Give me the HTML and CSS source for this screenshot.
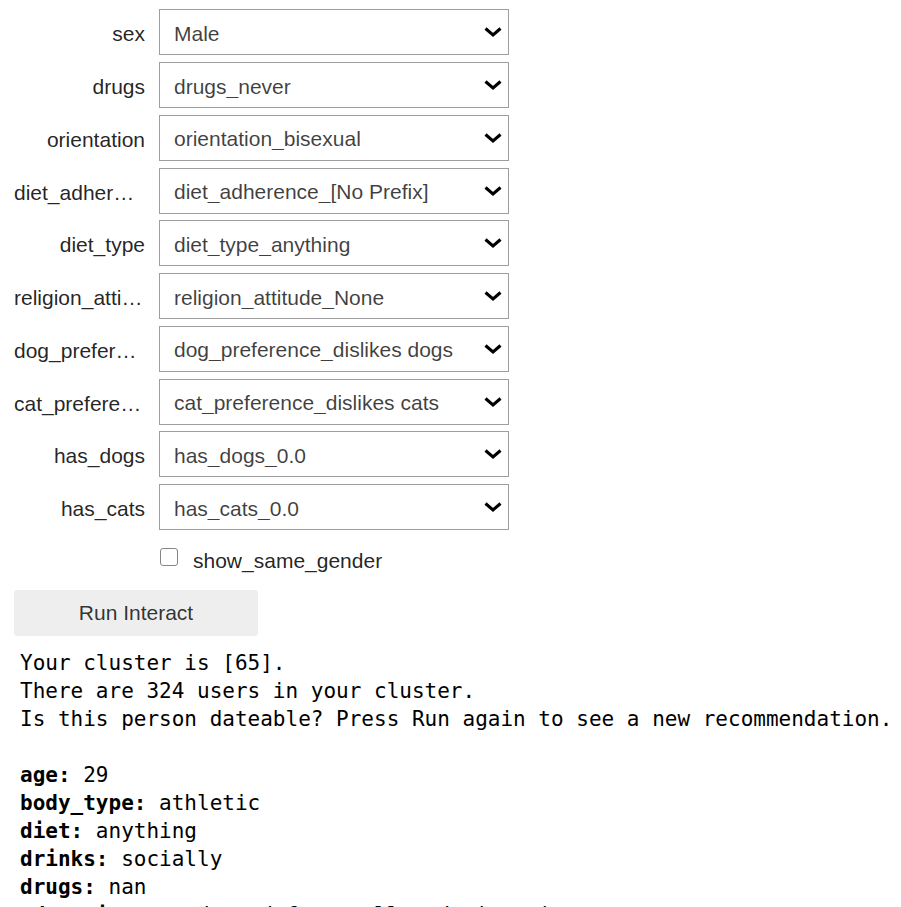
FILE: index.html
```html
<!DOCTYPE html>
<html>
<head>
<meta charset="utf-8">
<link rel="stylesheet" href="styles.css">
</head>
<body>
<div class="widgets">
  <div class="row"><label class="lbl">sex</label><div class="dd"><select class="sel"><option>Male</option></select><svg class="chev" width="18" height="10" viewBox="0 0 18 10"><polyline points="1.5,1.5 9,8 16.5,1.5"/></svg></div></div>
  <div class="row"><label class="lbl">drugs</label><div class="dd"><select class="sel"><option>drugs_never</option></select><svg class="chev" width="18" height="10" viewBox="0 0 18 10"><polyline points="1.5,1.5 9,8 16.5,1.5"/></svg></div></div>
  <div class="row"><label class="lbl">orientation</label><div class="dd"><select class="sel"><option>orientation_bisexual</option></select><svg class="chev" width="18" height="10" viewBox="0 0 18 10"><polyline points="1.5,1.5 9,8 16.5,1.5"/></svg></div></div>
  <div class="row"><label class="lbl">diet_adherence</label><div class="dd"><select class="sel"><option>diet_adherence_[No Prefix]</option></select><svg class="chev" width="18" height="10" viewBox="0 0 18 10"><polyline points="1.5,1.5 9,8 16.5,1.5"/></svg></div></div>
  <div class="row"><label class="lbl">diet_type</label><div class="dd"><select class="sel"><option>diet_type_anything</option></select><svg class="chev" width="18" height="10" viewBox="0 0 18 10"><polyline points="1.5,1.5 9,8 16.5,1.5"/></svg></div></div>
  <div class="row"><label class="lbl">religion_attitude</label><div class="dd"><select class="sel"><option>religion_attitude_None</option></select><svg class="chev" width="18" height="10" viewBox="0 0 18 10"><polyline points="1.5,1.5 9,8 16.5,1.5"/></svg></div></div>
  <div class="row"><label class="lbl">dog_preference</label><div class="dd"><select class="sel"><option>dog_preference_dislikes dogs</option></select><svg class="chev" width="18" height="10" viewBox="0 0 18 10"><polyline points="1.5,1.5 9,8 16.5,1.5"/></svg></div></div>
  <div class="row"><label class="lbl">cat_preference</label><div class="dd"><select class="sel"><option>cat_preference_dislikes cats</option></select><svg class="chev" width="18" height="10" viewBox="0 0 18 10"><polyline points="1.5,1.5 9,8 16.5,1.5"/></svg></div></div>
  <div class="row"><label class="lbl">has_dogs</label><div class="dd"><select class="sel"><option>has_dogs_0.0</option></select><svg class="chev" width="18" height="10" viewBox="0 0 18 10"><polyline points="1.5,1.5 9,8 16.5,1.5"/></svg></div></div>
  <div class="row"><label class="lbl">has_cats</label><div class="dd"><select class="sel"><option>has_cats_0.0</option></select><svg class="chev" width="18" height="10" viewBox="0 0 18 10"><polyline points="1.5,1.5 9,8 16.5,1.5"/></svg></div></div>
  <div class="row check-row"><label class="cb-wrap"><input type="checkbox" class="cb"><span class="cb-text">show_same_gender</span></label></div>
  <div class="row"><button class="run">Run Interact</button></div>
</div>
<pre class="out">Your cluster is [65].
There are 324 users in your cluster.
Is this person dateable? Press Run again to see a new recommendation.

<b>age:</b> 29
<b>body_type:</b> athletic
<b>diet:</b> anything
<b>drinks:</b> socially
<b>drugs:</b> nan
<b>education:</b> graduated from college/university</pre>
</body>
</html>
```

FILE: styles.css
```css
html, body {
  margin: 0;
  padding: 0;
  background: #ffffff;
}

body {
  font-family: "Liberation Sans", Arial, sans-serif;
  font-size: 21px;
  color: rgba(0, 0, 0, 0.87);
}

.widgets {
  display: flex;
  flex-direction: column;
  gap: 6.75px;
  padding: 9.25px 0 0 14px;
}

.row {
  display: flex;
  align-items: center;
  height: 46px;
}

.lbl {
  width: 131px;
  margin-right: 14px;
  padding-top: 3px;
  text-align: right;
  white-space: nowrap;
  overflow: hidden;
  text-overflow: ellipsis;
  color: rgba(0, 0, 0, 0.87);
  line-height: 43px;
}

.dd {
  position: relative;
  width: 350px;
  height: 46px;
}

.sel {
  appearance: none;
  -webkit-appearance: none;
  width: 350px;
  height: 46px;
  box-sizing: border-box;
  margin: 0;
  border: 1px solid #9e9e9e;
  border-radius: 0;
  background: #ffffff;
  padding: 2px 40px 0 14px;
  font-family: "Liberation Sans", Arial, sans-serif;
  font-size: 21px;
  color: rgba(0, 0, 0, 0.75);
  outline: none;
}

.chev {
  position: absolute;
  right: 7px;
  top: 18px;
  pointer-events: none;
}

.chev polyline {
  fill: none;
  stroke: #000000;
  stroke-width: 3;
  stroke-linecap: butt;
  stroke-linejoin: miter;
}

.check-row {
  padding-left: 146px;
}

.cb-wrap {
  display: flex;
  align-items: center;
  gap: 15px;
}

.cb {
  appearance: none;
  -webkit-appearance: none;
  width: 18px;
  height: 18px;
  margin: 0;
  box-sizing: border-box;
  border: 1.5px solid #858585;
  border-radius: 3px;
  background: #ffffff;
  position: relative;
  top: -3px;
}

.cb-text {
  color: rgba(0, 0, 0, 0.87);
  padding-top: 2px;
}

.run {
  width: 244px;
  height: 46px;
  border: none;
  border-radius: 3px;
  background: #eeeeee;
  font-family: "Liberation Sans", Arial, sans-serif;
  font-size: 21px;
  color: rgba(0, 0, 0, 0.8);
  padding: 0;
}

.out {
  margin: 13px 0 0 0;
  padding: 0 0 0 20px;
  font-family: "DejaVu Sans Mono", "Liberation Mono", monospace;
  font-size: 21px;
  line-height: 28px;
  color: #000000;
}

.out b {
  font-weight: bold;
}
```
